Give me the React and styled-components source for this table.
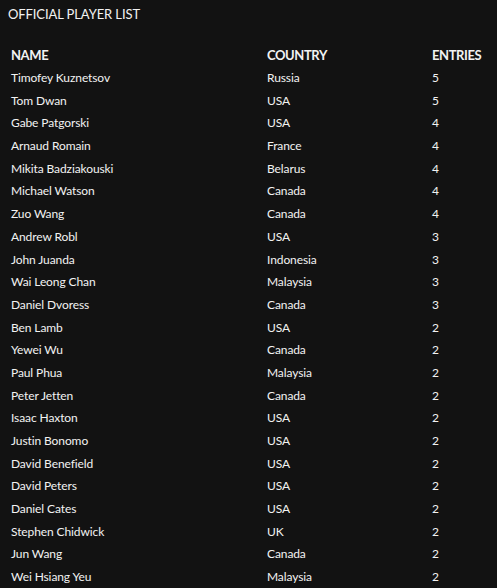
import styled, { createGlobalStyle } from "styled-components";

const players = [
  ["Timofey Kuznetsov", "Russia", 5],
  ["Tom Dwan", "USA", 5],
  ["Gabe Patgorski", "USA", 4],
  ["Arnaud Romain", "France", 4],
  ["Mikita Badziakouski", "Belarus", 4],
  ["Michael Watson", "Canada", 4],
  ["Zuo Wang", "Canada", 4],
  ["Andrew Robl", "USA", 3],
  ["John Juanda", "Indonesia", 3],
  ["Wai Leong Chan", "Malaysia", 3],
  ["Daniel Dvoress", "Canada", 3],
  ["Ben Lamb", "USA", 2],
  ["Yewei Wu", "Canada", 2],
  ["Paul Phua", "Malaysia", 2],
  ["Peter Jetten", "Canada", 2],
  ["Isaac Haxton", "USA", 2],
  ["Justin Bonomo", "USA", 2],
  ["David Benefield", "USA", 2],
  ["David Peters", "USA", 2],
  ["Daniel Cates", "USA", 2],
  ["Stephen Chidwick", "UK", 2],
  ["Jun Wang", "Canada", 2],
  ["Wei Hsiang Yeu", "Malaysia", 2],
];

const Global = createGlobalStyle`
  html, body {
    margin: 0;
    background: #121212;
  }
  body {
    font-family: Lato, "Open Sans", sans-serif;
    color: #f2f2f2;
  }
`;

const Page = styled.div`
  padding: 6px 0 0 0;
`;

const Title = styled.h2`
  margin: 0 0 0 8px;
  font-size: 13px;
  font-weight: 400;
  line-height: 16px;
  letter-spacing: -0.1px;
`;

const Table = styled.div`
  display: grid;
  grid-template-columns: 256px 165px 1fr;
  padding: 22px 0 0 11px;
`;

const Row = styled.div`
  display: contents;
`;

const Cell = styled.div`
  height: ${(p) => (p.$head ? "23px" : "22.7px")};
  line-height: ${(p) => (p.$head ? "23px" : "22.7px")};
  font-size: ${(p) => (p.$head ? "13px" : "12px")};
  font-weight: ${(p) => (p.$head ? 700 : 400)};
  letter-spacing: ${(p) => (p.$head ? "-0.4px" : "-0.1px")};
  white-space: nowrap;
`;

export default function App() {
  return (
    <Page>
      <Global />
      <Title>OFFICIAL PLAYER LIST</Title>
      <Table>
        <Row>
          <Cell $head>NAME</Cell>
          <Cell $head>COUNTRY</Cell>
          <Cell $head>ENTRIES</Cell>
        </Row>
        {players.map(([name, country, entries]) => (
          <Row key={name}>
            <Cell>{name}</Cell>
            <Cell>{country}</Cell>
            <Cell>{entries}</Cell>
          </Row>
        ))}
      </Table>
    </Page>
  );
}
